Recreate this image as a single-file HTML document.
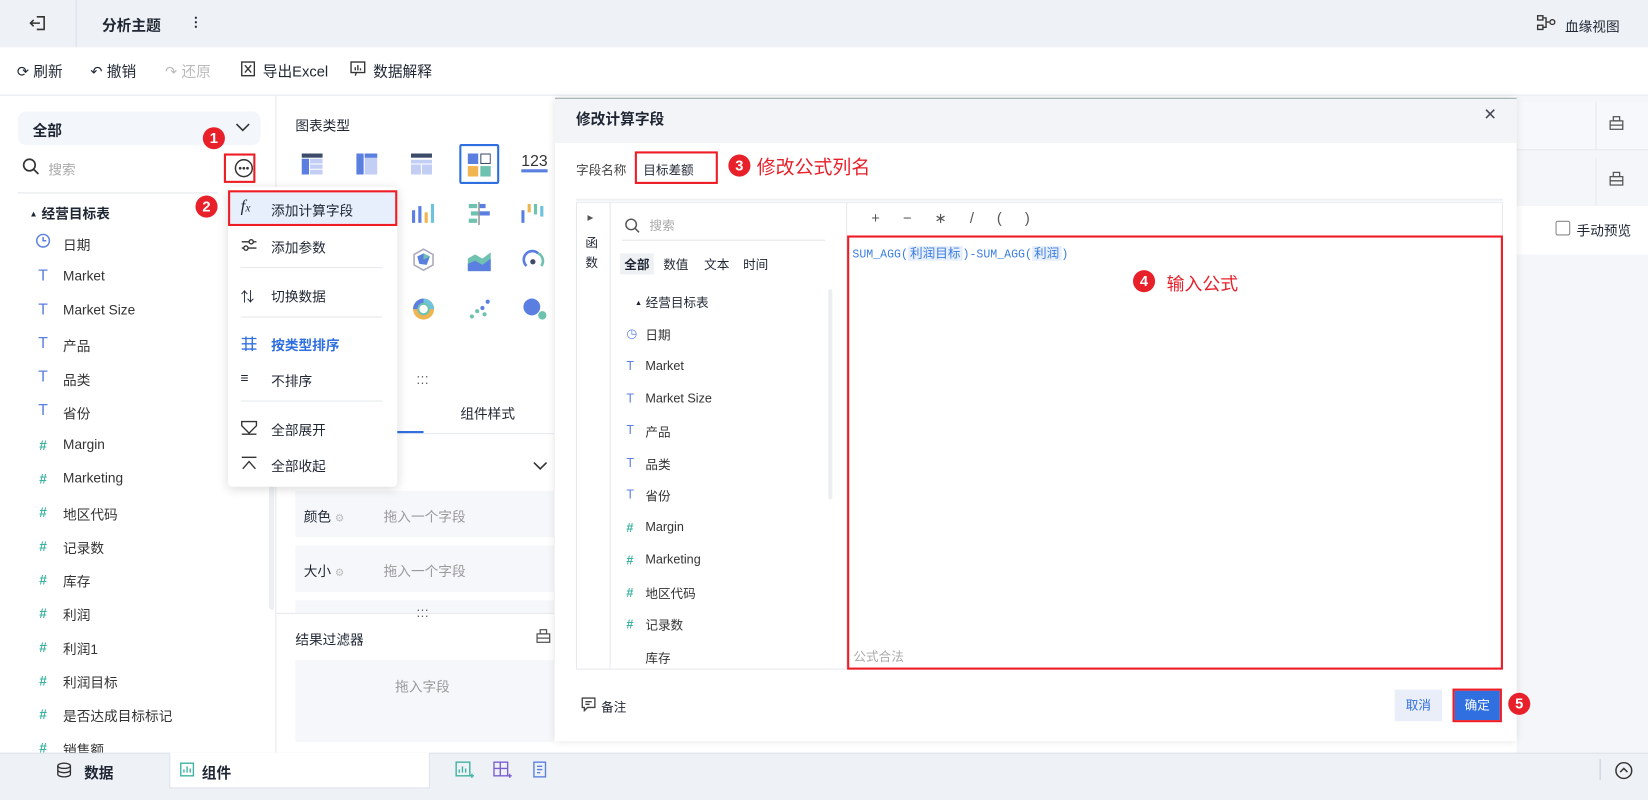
<!DOCTYPE html>
<html><head><meta charset="utf-8"><style>
*{box-sizing:border-box;margin:0;padding:0}
body{width:1648px;height:800px;overflow:hidden;background:#fff;font-family:"Liberation Sans","Noto Sans CJK SC",sans-serif;color:#1f2633;font-size:13px}
#w{position:absolute;left:0;top:0;width:1568px;height:761px;transform:scale(1.05102,1.05125);transform-origin:0 0;overflow:hidden}
.a{position:absolute;white-space:nowrap}
.red{position:absolute;border:2px solid #ee1c25}
.num{position:absolute;width:21px;height:21px;border-radius:50%;background:#e8202a;color:#fff;font-weight:bold;font-size:14px;text-align:center;line-height:21px}
.it{position:absolute;left:34px;font-size:13px;color:#333}
.ic{position:absolute;left:0;width:14px;text-align:center;color:#3bb3a0;font-weight:bold}
.icb{color:#5a7fe0}
.fl{position:absolute;left:32px;font-size:12px;color:#333}
.fl b{position:absolute;left:-18px;top:1px;font-weight:bold;color:#3bb3a0}
.fl i{position:absolute;left:-18px;font-style:normal;color:#5a7fe0}
.sq{position:absolute;width:20px;height:20px}
</style></head><body><div id="w">
<div class="a" style="left:0;top:0;width:1568px;height:45px;background:#eef1f6"></div>
<div class="a" style="left:72px;top:0;width:1px;height:45px;background:#dde2ea"></div>
<svg class="a" style="left:27px;top:13px" width="18" height="18" viewBox="0 0 18 18" fill="none" stroke="#333" stroke-width="1.5"><path d="M8 3h7v12H8M2 9h9M5 6L2 9l3 3"/></svg>
<div class="a" style="left:97px;top:14px;font-weight:bold;font-size:14px">分析主题</div>
<div class="a" style="left:180px;top:13px;font-weight:bold">⋮</div>
<svg class="a" style="left:1462px;top:14px" width="18" height="16" fill="none" stroke="#333" stroke-width="1.3"><rect x="1" y="1" width="5" height="4"/><rect x="1" y="10" width="5" height="4"/><path d="M6 3h3v9H6M9 7h3"/><circle cx="15" cy="7" r="2.3"/></svg>
<div class="a" style="left:1489px;top:15px;font-size:13px">血缘视图</div>
<div class="a" style="left:0;top:90px;width:1568px;height:1px;background:#e6e9ee"></div>
<div class="a" style="left:16px;top:58px;font-size:14px">⟳ 刷新</div>
<div class="a" style="left:86px;top:58px;font-size:14px">↶ 撤销</div>
<div class="a" style="left:157px;top:58px;font-size:14px;color:#bbb">↷ 还原</div>
<svg class="a" style="left:229px;top:58px" width="14" height="15" fill="none" stroke="#333" stroke-width="1.3"><rect x="1" y="1" width="12" height="13"/><path d="M4 4l6 7M10 4l-6 7"/></svg>
<div class="a" style="left:250px;top:58px;font-size:14px">导出Excel</div>
<svg class="a" style="left:333px;top:58px" width="15" height="15" fill="none" stroke="#333" stroke-width="1.3"><rect x="1" y="1" width="13" height="10"/><path d="M5 9V6M7.5 9V4M10 9V7M6 11l-1 3"/></svg>
<div class="a" style="left:355px;top:58px;font-size:14px">数据解释</div>
<div class="a" style="left:17px;top:106px;width:231px;height:32px;background:#f3f6fb;border-radius:8px"></div>
<div class="a" style="left:31px;top:114px;font-weight:bold;font-size:14px">全部</div>
<svg class="a" style="left:224px;top:116px" width="14" height="10" fill="none" stroke="#333" stroke-width="1.5"><path d="M1 2l6 6 6-6"/></svg>
<svg class="a" style="left:21px;top:150px" width="17" height="17" fill="none" stroke="#333" stroke-width="1.6"><circle cx="7" cy="7" r="5.5"/><path d="M11 11l4.5 4.5"/></svg>
<div class="a" style="left:46px;top:151px;color:#aaa;font-size:13px">搜索</div>
<div class="a" style="left:17px;top:183px;width:190px;height:1px;background:#e3e6eb"></div>
<svg class="a" style="left:222px;top:150px" width="20" height="20" fill="none" stroke="#333" stroke-width="1.4"><circle cx="10" cy="10" r="8"/><circle cx="6.5" cy="10" r=".6" fill="#333"/><circle cx="10" cy="10" r=".6" fill="#333"/><circle cx="13.5" cy="10" r=".6" fill="#333"/></svg>
<div class="red" style="left:213px;top:146px;width:30px;height:28px"></div>
<div class="num" style="left:193px;top:121px">1</div>
<div class="a" style="left:256px;top:180px;width:5px;height:400px;background:#eceef2;border-radius:3px"></div>
<div class="a" style="left:262px;top:91px;width:1px;height:625px;background:#e6e9ee"></div>
<div class="a" style="left:28px;top:193px;font-size:13px;font-weight:bold"><span style="font-size:8px;vertical-align:2px">▲</span> 经营目标表</div>
<div class="a" style="left:34px;top:0;width:0">
<svg class="a" style="left:0;top:222px" width="14" height="14" fill="none" stroke="#5a7fe0" stroke-width="1.4"><circle cx="7" cy="7" r="6"/><path d="M7 3.5V7h3"/></svg>
<div class="it" style="left:26px;top:223px">日期</div>
<div class="ic icb" style="top:254px;font-weight:normal;font-size:15px">T</div><div class="it" style="left:26px;top:255px">Market</div>
<div class="ic icb" style="top:286px;font-weight:normal;font-size:15px">T</div><div class="it" style="left:26px;top:287px">Market Size</div>
<div class="ic icb" style="top:318px;font-weight:normal;font-size:15px">T</div><div class="it" style="left:26px;top:319px">产品</div>
<div class="ic icb" style="top:350px;font-weight:normal;font-size:15px">T</div><div class="it" style="left:26px;top:351px">品类</div>
<div class="ic icb" style="top:382px;font-weight:normal;font-size:15px">T</div><div class="it" style="left:26px;top:383px">省份</div>
<div class="ic" style="top:416px">#</div><div class="it" style="left:26px;top:415px">Margin</div>
<div class="ic" style="top:448px">#</div><div class="it" style="left:26px;top:447px">Marketing</div>
<div class="ic" style="top:480px">#</div><div class="it" style="left:26px;top:479px">地区代码</div>
<div class="ic" style="top:512px">#</div><div class="it" style="left:26px;top:511px">记录数</div>
<div class="ic" style="top:544px">#</div><div class="it" style="left:26px;top:543px">库存</div>
<div class="ic" style="top:576px">#</div><div class="it" style="left:26px;top:575px">利润</div>
<div class="ic" style="top:608px">#</div><div class="it" style="left:26px;top:607px">利润1</div>
<div class="ic" style="top:640px">#</div><div class="it" style="left:26px;top:639px">利润目标</div>
<div class="ic" style="top:672px">#</div><div class="it" style="left:26px;top:671px">是否达成目标标记</div>
<div class="ic" style="top:704px">#</div><div class="it" style="left:26px;top:703px">销售额</div>
</div>
<div class="a" style="left:281px;top:109px;font-size:13px">图表类型</div>
<div class="a" style="left:437px;top:137px;width:38px;height:38px;border:2px solid #2f6fe0;border-radius:2px;background:#fff"></div>
<svg class="a" style="left:287px;top:146px" width="20" height="20"><rect x="0" y="0" width="20" height="4" fill="#3d4b6b"/><rect x="0" y="5" width="7" height="15" fill="#5a7fe0"/><rect x="8" y="5" width="12" height="15" fill="#c3cef5"/><path d="M8 10h12M8 15h12" stroke="#fff"/></svg>
<svg class="a" style="left:339px;top:146px" width="20" height="20"><rect x="0" y="0" width="7" height="20" fill="#5a7fe0"/><rect x="8" y="0" width="12" height="20" fill="#c3cef5"/><rect x="8" y="0" width="12" height="4" fill="#5a7fe0"/></svg>
<svg class="a" style="left:391px;top:146px" width="20" height="20"><rect x="0" y="0" width="20" height="4" fill="#3d4b6b"/><rect x="0" y="6" width="20" height="14" fill="#c3cef5"/><path d="M10 10v10M0 10h20" stroke="#fff"/></svg>
<svg class="a" style="left:445px;top:146px" width="22" height="22"><rect x="0" y="0" width="10" height="10" fill="#5a7fe0"/><rect x="12.5" y="0.5" width="9" height="9" fill="none" stroke="#3d4b6b"/><rect x="0" y="12" width="10" height="10" fill="#f0b451"/><rect x="12" y="12" width="10" height="10" fill="#6fc2b0"/></svg>
<div class="a" style="left:496px;top:146px;font-size:15px;color:#333;border-bottom:3px solid #5a7fe0;line-height:15px">123</div>
<svg class="a" style="left:392px;top:192px" width="24" height="22"><rect x="0" y="8" width="3" height="12" fill="#5a7fe0"/><rect x="6" y="4" width="3" height="16" fill="#5a7fe0"/><rect x="12" y="10" width="3" height="10" fill="#f0b451"/><rect x="18" y="2" width="3" height="18" fill="#6fc2dc"/></svg>
<svg class="a" style="left:444px;top:192px" width="24" height="22"><rect x="2" y="2" width="8" height="4" fill="#6fc2b0"/><rect x="12" y="2" width="6" height="4" fill="#5a7fe0"/><rect x="4" y="9" width="8" height="4" fill="#6fc2b0"/><rect x="12" y="9" width="10" height="4" fill="#5a7fe0"/><rect x="2" y="16" width="8" height="4" fill="#6fc2b0"/><rect x="11" y="0" width="1.5" height="22" fill="#999"/></svg>
<svg class="a" style="left:496px;top:192px" width="24" height="22"><rect x="0" y="8" width="3" height="12" fill="#5a7fe0"/><rect x="6" y="2" width="3" height="8" fill="#f0b451"/><rect x="12" y="2" width="3" height="10" fill="#6fc2b0"/><rect x="18" y="4" width="3" height="10" fill="#6fc2dc"/></svg>
<svg class="a" style="left:392px;top:236px" width="22" height="22"><polygon points="11,1 20,6 20,16 11,21 2,16 2,6" fill="#fff" stroke="#aab" stroke-width="1.5"/><polygon points="11,5 17,8 14,16 7,15 5,8" fill="#5a7fe0"/><polygon points="11,5 17,8 11,11" fill="#6fc2b0"/></svg>
<svg class="a" style="left:445px;top:236px" width="22" height="22"><path d="M0 10l7-4 7 4 8-6v18H0z" fill="#6fc2b0"/><path d="M0 15l7-3 7 4 8-6v12H0z" fill="#5a7fe0"/></svg>
<svg class="a" style="left:497px;top:236px" width="22" height="22" fill="none" stroke-width="2.5"><path d="M4 17a8 8 0 0 1 11-12" stroke="#5a7fe0"/><path d="M15 5a8 8 0 0 1 3 12" stroke="#6fc2b0"/><circle cx="10" cy="13" r="2.5" fill="#3d4b6b" stroke="none"/></svg>
<svg class="a" style="left:392px;top:283px" width="22" height="22"><circle cx="11" cy="11" r="10" fill="#f0b451"/><path d="M11 1a10 10 0 0 1 10 10H11z" fill="#6fc2dc"/><path d="M1 11A10 10 0 0 1 11 1v10z" fill="#5a7fe0"/><circle cx="11" cy="11" r="5" fill="#fff" stroke="#6fc2b0" stroke-width="2"/></svg>
<svg class="a" style="left:445px;top:283px" width="22" height="22"><circle cx="4" cy="18" r="2" fill="#6fc2b0"/><circle cx="9" cy="13" r="2" fill="#6fc2b0"/><circle cx="14" cy="10" r="2" fill="#5a7fe0"/><circle cx="19" cy="4" r="2" fill="#5a7fe0"/><circle cx="16" cy="16" r="2" fill="#6fc2b0"/></svg>
<svg class="a" style="left:497px;top:283px" width="24" height="22"><circle cx="9" cy="9" r="8" fill="#5a7fe0"/><circle cx="19" cy="17" r="4" fill="#6fc2b0"/></svg>
<div class="a" style="left:396px;top:355px;font-size:12px;color:#555;line-height:6px">···<br>···</div>
<div class="a" style="left:263px;top:412px;width:264px;height:1px;background:#e6e9ee"></div>
<div class="a" style="left:263px;top:410px;width:140px;height:2px;background:#2f6fe0"></div>
<div class="a" style="left:438px;top:383px">组件样式</div>
<svg class="a" style="left:507px;top:438px" width="14" height="10" fill="none" stroke="#333" stroke-width="1.5"><path d="M1 2l6 6 6-6"/></svg>
<div class="a" style="left:281px;top:467px;width:246px;height:44px;background:#f5f7fb"></div>
<div class="a" style="left:289px;top:481px">颜色 <span style="color:#bbb;font-size:10px">⚙</span></div>
<div class="a" style="left:365px;top:481px;color:#999">拖入一个字段</div>
<div class="a" style="left:281px;top:519px;width:246px;height:44px;background:#f5f7fb"></div>
<div class="a" style="left:289px;top:533px">大小 <span style="color:#bbb;font-size:10px">⚙</span></div>
<div class="a" style="left:365px;top:533px;color:#999">拖入一个字段</div>
<div class="a" style="left:281px;top:571px;width:246px;height:12px;background:#f5f7fb"></div>
<div class="a" style="left:263px;top:583px;width:264px;height:1px;background:#e6e9ee"></div>
<div class="a" style="left:396px;top:577px;font-size:12px;color:#555;line-height:6px">···<br>···</div>
<div class="a" style="left:281px;top:598px">结果过滤器</div>
<svg class="a" style="left:510px;top:598px" width="14" height="14" fill="none" stroke="#555" stroke-width="1.2"><rect x="1" y="5" width="12" height="8"/><rect x="4" y="1" width="6" height="4"/><path d="M1 9h12"/></svg>
<div class="a" style="left:281px;top:628px;width:246px;height:78px;background:#f5f7fb"></div>
<div class="a" style="left:376px;top:643px;color:#999">拖入字段</div>
<div class="a" style="left:217px;top:178px;width:161px;height:285px;background:#fff;border-radius:4px;box-shadow:0 2px 10px rgba(0,0,0,.15)"></div>
<div class="a" style="left:219px;top:183px;width:157px;height:30px;background:#e8effc"></div>
<div class="red" style="left:217px;top:181px;width:161px;height:34px"></div>
<div class="a" style="left:229px;top:188px;font-style:italic;font-family:'Liberation Serif',serif;font-size:16px">f<span style="font-size:11px">x</span></div>
<div class="a" style="left:258px;top:190px">添加计算字段</div>
<svg class="a" style="left:229px;top:226px" width="16" height="14" fill="none" stroke="#333" stroke-width="1.3"><path d="M1 4h14M1 10h14"/><circle cx="10" cy="4" r="2" fill="#fff"/><circle cx="5" cy="10" r="2" fill="#fff"/></svg>
<div class="a" style="left:258px;top:225px">添加参数</div>
<div class="a" style="left:229px;top:254px;width:135px;height:1px;background:#e6e9ee"></div>
<div class="a" style="left:229px;top:272px">⇅</div>
<div class="a" style="left:258px;top:272px">切换数据</div>
<div class="a" style="left:229px;top:301px;width:135px;height:1px;background:#e6e9ee"></div>
<svg class="a" style="left:229px;top:320px" width="16" height="14" fill="none" stroke="#2f6fe0" stroke-width="1.3"><path d="M1 2h14M1 7h14M1 12h14M5 0v14M11 0v14"/></svg>
<div class="a" style="left:258px;top:318px;color:#2f6fe0;font-weight:bold">按类型排序</div>
<div class="a" style="left:229px;top:352px">≡</div>
<div class="a" style="left:258px;top:352px">不排序</div>
<div class="a" style="left:229px;top:381px;width:135px;height:1px;background:#e6e9ee"></div>
<svg class="a" style="left:229px;top:400px" width="16" height="14" fill="none" stroke="#333" stroke-width="1.3"><path d="M1 1h14v4L8 12 1 5zM1 13h14"/></svg>
<div class="a" style="left:258px;top:399px">全部展开</div>
<svg class="a" style="left:229px;top:434px" width="16" height="14" fill="none" stroke="#333" stroke-width="1.3"><path d="M1 1h14M2 12l6-7 6 7"/></svg>
<div class="a" style="left:258px;top:433px">全部收起</div>
<div class="num" style="left:186px;top:186px">2</div>
<div class="a" style="left:1443px;top:91px;width:125px;height:625px;background:#f5f6f9"></div>
<div class="a" style="left:1443px;top:97px;width:125px;height:46px;background:#f7f8fb;border-bottom:1px solid #e6e9ee"></div>
<div class="a" style="left:1518px;top:97px;width:1px;height:46px;background:#e6e9ee"></div>
<div class="a" style="left:1518px;top:150px;width:1px;height:46px;background:#e6e9ee"></div>
<svg class="a" style="left:1531px;top:110px" width="14" height="14" fill="none" stroke="#555" stroke-width="1.2"><rect x="1" y="5" width="12" height="8"/><rect x="4" y="1" width="6" height="4"/><path d="M1 9h12"/></svg>
<svg class="a" style="left:1531px;top:163px" width="14" height="14" fill="none" stroke="#555" stroke-width="1.2"><rect x="1" y="5" width="12" height="8"/><rect x="4" y="1" width="6" height="4"/><path d="M1 9h12"/></svg>
<div class="a" style="left:1443px;top:196px;width:125px;height:46px;background:#fff"></div>
<div class="a" style="left:1480px;top:210px;width:14px;height:14px;border:1px solid #888;border-radius:2px;background:#fff"></div>
<div class="a" style="left:1500px;top:209px">手动预览</div>
<div class="a" style="left:528px;top:93px;width:915px;height:612px;background:#fff;box-shadow:0 0 8px rgba(0,0,0,.12)"></div>
<div class="a" style="left:528px;top:93px;width:915px;height:43px;background:#f3f4f8;border-top:1px solid #9aa"></div>
<div class="a" style="left:548px;top:103px;font-weight:bold;font-size:14px">修改计算字段</div>
<div class="a" style="left:1412px;top:98px;font-size:20px;color:#445">×</div>
<div class="a" style="left:548px;top:153px;font-size:12px;color:#444">字段名称</div>
<div class="red" style="left:604px;top:144px;width:79px;height:31px"></div>
<div class="a" style="left:612px;top:153px;font-size:12px">目标差额</div>
<div class="num" style="left:693px;top:147px">3</div>
<div class="a" style="left:720px;top:145px;color:#e8202a;font-size:18px">修改公式列名</div>
<div class="a" style="left:548px;top:189px;width:882px;height:2px;background:#eef0f3"></div>
<div class="a" style="left:548px;top:192px;width:882px;height:445px;border:1px solid #e6e9ee"></div>
<div class="a" style="left:580px;top:192px;width:1px;height:445px;background:#e6e9ee"></div>
<div class="a" style="left:805px;top:192px;width:1px;height:445px;background:#e6e9ee"></div>
<div class="a" style="left:559px;top:200px;font-size:11px;color:#555">▸</div>
<div class="a" style="left:557px;top:222px;font-size:12px;line-height:19px">函<br>数</div>
<svg class="a" style="left:594px;top:207px" width="15" height="15" fill="none" stroke="#555" stroke-width="1.4"><circle cx="6.5" cy="6.5" r="5"/><path d="M10 10l4 4"/></svg>
<div class="a" style="left:618px;top:206px;color:#aaa;font-size:12px">搜索</div>
<div class="a" style="left:592px;top:228px;width:193px;height:1px;background:#e3e6eb"></div>
<div class="a" style="left:590px;top:241px;width:32px;height:20px;background:#eef0f4"></div>
<div class="a" style="left:594px;top:243px;font-size:12px;font-weight:bold">全部</div>
<div class="a" style="left:631px;top:243px;font-size:12px">数值</div>
<div class="a" style="left:670px;top:243px;font-size:12px">文本</div>
<div class="a" style="left:707px;top:243px;font-size:12px">时间</div>
<div class="a" style="left:788px;top:275px;width:4px;height:200px;background:#eceef2;border-radius:2px"></div>
<div class="a" style="left:604px;top:279px;font-size:12px"><span style="font-size:7px;vertical-align:2px">▲</span> 经营目标表</div>
<div class="a" style="left:582px;top:0">
<div class="fl" style="top:310px"><i>◷</i>日期</div>
<div class="fl" style="top:341px"><i>T</i>Market</div>
<div class="fl" style="top:372px"><i>T</i>Market Size</div>
<div class="fl" style="top:402px"><i>T</i>产品</div>
<div class="fl" style="top:433px"><i>T</i>品类</div>
<div class="fl" style="top:463px"><i>T</i>省份</div>
<div class="fl" style="top:494px"><b>#</b>Margin</div>
<div class="fl" style="top:525px"><b>#</b>Marketing</div>
<div class="fl" style="top:556px"><b>#</b>地区代码</div>
<div class="fl" style="top:586px"><b>#</b>记录数</div>
<div class="fl" style="top:617px;height:19px;overflow:hidden"><b>#</b>库存</div>
</div>
<div class="a" style="left:829px;top:199px;font-size:14px;color:#555;word-spacing:18px">+ − ∗ / ( )</div>
<div class="red" style="left:806px;top:224px;width:624px;height:413px"></div>
<div class="a" style="left:811px;top:232px;font-family:'Liberation Mono',monospace;font-size:11px;color:#3a7de0">SUM_AGG(<span style="background:#e8effc;padding:0 2px;font-family:'Liberation Sans','Noto Sans CJK SC',sans-serif;font-size:12px">利润目标</span>)-SUM_AGG(<span style="background:#e8effc;padding:0 2px;font-family:'Liberation Sans','Noto Sans CJK SC',sans-serif;font-size:12px">利润</span>)</div>
<div class="num" style="left:1078px;top:257px">4</div>
<div class="a" style="left:1110px;top:256px;color:#e8202a;font-size:17px">输入公式</div>
<div class="a" style="left:812px;top:616px;color:#aaa;font-size:12px">公式合法</div>
<svg class="a" style="left:553px;top:663px" width="14" height="14" fill="none" stroke="#444" stroke-width="1.3"><path d="M1 1h12v9H6l-3 3v-3H1z"/><path d="M4 4.5h6M4 7h4"/></svg>
<div class="a" style="left:572px;top:664px;font-size:12px">备注</div>
<div class="a" style="left:1327px;top:656px;width:45px;height:30px;background:#e9eef9;color:#2f6fe0;font-size:12px;text-align:center;line-height:30px">取消</div>
<div class="a" style="left:1384px;top:657px;width:43px;height:28px;background:#2f6fe0;color:#fff;font-size:12px;text-align:center;line-height:28px">确定</div>
<div class="red" style="left:1382px;top:655px;width:47px;height:32px"></div>
<div class="num" style="left:1435px;top:659px">5</div>
<div class="a" style="left:0;top:716px;width:1568px;height:45px;background:#eef1f6;border-top:1px solid #dde2ea"></div>
<div class="a" style="left:161px;top:716px;width:248px;height:34px;background:#fff;border:1px solid #dde2ea;border-top:0"></div>
<svg class="a" style="left:54px;top:725px" width="14" height="15" fill="none" stroke="#333" stroke-width="1.3"><ellipse cx="7" cy="3.5" rx="6" ry="2.5"/><path d="M1 3.5v8c0 1.4 2.7 2.5 6 2.5s6-1.1 6-2.5v-8M1 7.5c0 1.4 2.7 2.5 6 2.5s6-1.1 6-2.5"/></svg>
<div class="a" style="left:80px;top:725px;font-weight:bold;font-size:14px">数据</div>
<svg class="a" style="left:171px;top:725px" width="14" height="14" fill="none" stroke="#3bb3a0" stroke-width="1.3"><rect x="1" y="1" width="12" height="12"/><path d="M4 10V7M7 10V4M10 10V6"/></svg>
<div class="a" style="left:192px;top:725px;font-weight:bold;font-size:14px">组件</div>
<svg class="a" style="left:433px;top:724px" width="18" height="18" fill="none" stroke="#3bb3a0" stroke-width="1.3"><rect x="1" y="1" width="13" height="13"/><path d="M4 11V8M7 11V5M10 11V7M14 14h4M16 12v4"/></svg>
<svg class="a" style="left:469px;top:724px" width="18" height="18" fill="none" stroke="#7a5fd0" stroke-width="1.3"><rect x="1" y="1" width="13" height="13"/><path d="M1 7h13M7 1v13M14 14h4M16 12v4"/></svg>
<svg class="a" style="left:506px;top:724px" width="18" height="18" fill="none" stroke="#5a7fe0" stroke-width="1.3"><rect x="2" y="1" width="11" height="14"/><path d="M5 5h5M5 8h5M5 11h3"/></svg>
<div class="a" style="left:1522px;top:722px;width:1px;height:20px;background:#ccd"></div>
<svg class="a" style="left:1536px;top:724px" width="18" height="18" fill="none" stroke="#333" stroke-width="1.4"><circle cx="9" cy="9" r="7.5"/><path d="M5.5 10.5L9 7l3.5 3.5"/></svg>
</div></body></html>
